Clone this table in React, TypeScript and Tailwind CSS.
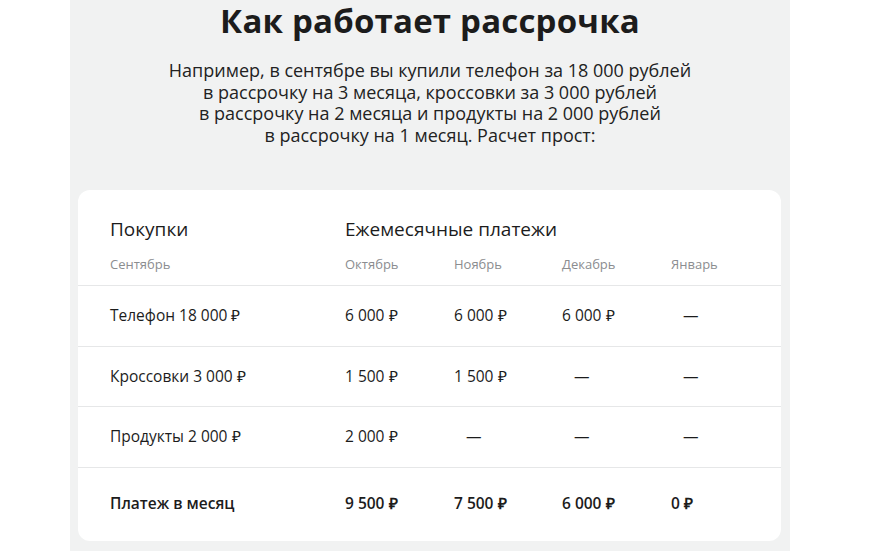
const months = ['Октябрь', 'Ноябрь', 'Декабрь', 'Январь'];

const rows: { name: string; pays: (string | null)[] }[] = [
  { name: 'Телефон 18 000 ₽', pays: ['6 000 ₽', '6 000 ₽', '6 000 ₽', null] },
  { name: 'Кроссовки 3 000 ₽', pays: ['1 500 ₽', '1 500 ₽', null, null] },
  { name: 'Продукты 2 000 ₽', pays: ['2 000 ₽', null, null, null] },
];

const totals = ['9 500 ₽', '7 500 ₽', '6 000 ₽', '0 ₽'];

const grid = 'grid grid-cols-[235px_109px_108px_109px_1fr] pl-[32px]';

function Cell({ value }: { value: string | null }) {
  if (!value) return <div className="pl-[12px]">—</div>;
  return <div>{value}</div>;
}

export default function App() {
  return (
    <div className="min-h-[551px] bg-white font-['Open_Sans',sans-serif] text-[#1c1c1c]">
      <div className="ml-[70px] w-[720px] bg-[#f1f2f2] h-[551px] overflow-hidden">
        <h1 className="pt-[1px] text-center text-[33px] font-bold leading-[40px] tracking-[0.2px]">
          Как работает рассрочка
        </h1>
        <p className="mt-[19px] text-center text-[18px] leading-[21.5px] text-[#222]">
          Например, в сентябре вы купили телефон за 18 000 рублей
          <br />в рассрочку на 3 месяца, кроссовки за 3 000 рублей
          <br />в рассрочку на 2 месяца и продукты на 2 000 рублей
          <br />в рассрочку на 1 месяц. Расчет прост:
        </p>

        <div className="ml-[8px] mt-[44px] w-[703px] rounded-[12px] bg-white">
          <div className={`${grid} pt-[26px] pb-[12px] text-[19px] leading-[26px]`}>
            <div>Покупки</div>
            <div className="col-span-4">Ежемесячные платежи</div>
          </div>
          <div className={`${grid} pb-[11px] text-[13px] leading-[20px] text-[#8b8d90]`}>
            <div>Сентябрь</div>
            {months.map((m) => (
              <div key={m}>{m}</div>
            ))}
          </div>

          {rows.map((r) => (
            <div
              key={r.name}
              className={`${grid} border-t border-[#e6e7e8] h-[60.5px] items-center text-[15.5px]`}
            >
              <div>{r.name}</div>
              {r.pays.map((p, i) => (
                <Cell key={i} value={p} />
              ))}
            </div>
          ))}

          <div
            className={`${grid} border-t border-[#e6e7e8] h-[74px] items-center text-[15.5px] font-semibold`}
          >
            <div>Платеж в месяц</div>
            {totals.map((t, i) => (
              <div key={i}>{t}</div>
            ))}
          </div>
        </div>
      </div>
    </div>
  );
}
